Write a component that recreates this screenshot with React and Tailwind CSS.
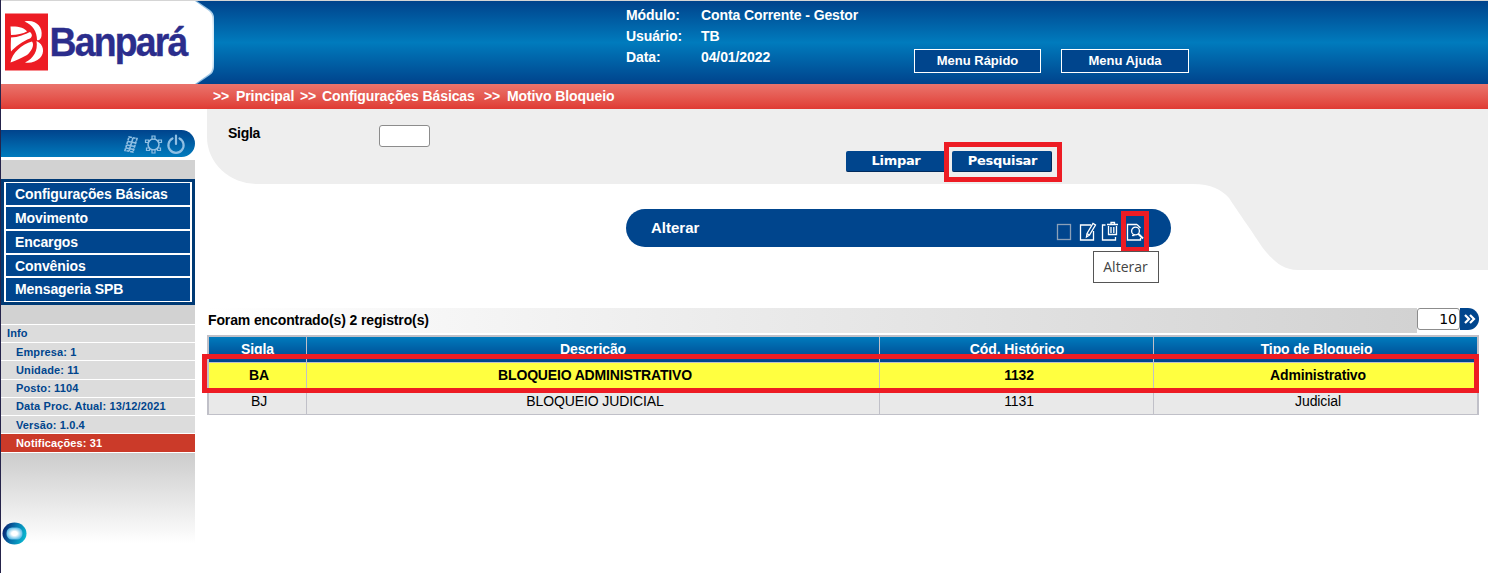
const menu = [
  { label: "Configurações Básicas", h: "h-[22px]" },
  { label: "Movimento", h: "h-[22px]" },
  { label: "Encargos", h: "h-[22px]" },
  { label: "Convênios", h: "h-[21px] pt-px" },
  { label: "Mensageria SPB", h: "h-[23px]" },
];

const info = [
  { label: "Empresa: 1", h: "h-[18px] leading-[18px]" },
  { label: "Unidade: 11", h: "h-[19px] leading-[18px]" },
  { label: "Posto: 1104", h: "h-[18px] leading-[16px]" },
  { label: "Data Proc. Atual: 13/12/2021", h: "h-[18px] leading-[16px]" },
  { label: "Versão: 1.0.4", h: "h-[18px] leading-[18px]" },
];

const rows = [
  ["BA", "BLOQUEIO ADMINISTRATIVO", "1132", "Administrativo"],
  ["BJ", "BLOQUEIO JUDICIAL", "1131", "Judicial"],
];

function Logo() {
  return (
    <svg width="214" height="83" viewBox="0 0 214 83" className="block shrink-0">
      <defs>
        <linearGradient id="edge" x1="0" x2="0" y1="0" y2="1">
          <stop offset="0" stopColor="#7fb3dc" />
          <stop offset="0.3" stopColor="#d8eaf6" />
          <stop offset="0.7" stopColor="#d8eaf6" />
          <stop offset="1" stopColor="#7fb3dc" />
        </linearGradient>
      </defs>
      <path d="M0 0H196L209 9Q213 12 213 17V66Q213 71 209 74L196 83H0Z" fill="url(#edge)" />
      <path d="M0 0H194L208 10Q211.500 13 211.500 18V65Q211.500 70 208 73L194 83H0Z" fill="#fff" />
      <rect x="4" y="12.500" width="43" height="57" fill="#ed1c24" />
      <g fill="#fff">
        <path d="M9.500 25.500C17 25 24 27 26 30.500C22 32.500 16 34 10 34Z" />
        <path d="M23.500 20.500C35 18 42 26 40.500 35C40 38 38 40 36 39C36 31 32 24 23.500 20.500Z" />
        <path d="M10 36.500C17 36.500 25 33 29 31C32 34 31 36 29 37.500C22 40 14 46 10 50.500C9.500 46 10 40 10 36.500Z" />
        <path d="M9.500 61.500C11 52 21 43 31 40.500C34 44 30 51 26 54C20 57 15 60 9.500 61.500Z" />
        <path d="M35.500 40C43 43 44 52 39 57C35 61 29 62.500 24 61.500C33 57 37 50 35.500 40Z" />
      </g>
      <text x="48.500" y="54.500" fontFamily="'Liberation Sans', Arial, sans-serif" fontWeight="700" fontSize="41.500" letterSpacing="-2" fill="#2b2d8c" stroke="#2b2d8c" strokeWidth="0.400" textLength="137" lengthAdjust="spacingAndGlyphs">Banpará</text>
    </svg>
  );
}

function SideIcons() {
  return (
    <svg width="66" height="22" viewBox="0 0 66 22" fill="none" stroke="#8fbfe3" className="block">
      <g strokeWidth="1.600">
        <path d="M8 4L16 5.500L12 19L4 17.500Z" strokeDasharray="3 0.700" />
        <path d="M12 5L8 18M7 8.500L15 10M6 12L14 13.500M5 15L13 16.500" />
      </g>
      <g strokeWidth="1.500">
        <circle cx="32.500" cy="11.500" r="5.500" />
        <path d="M31 3h3v3h-3zM31 17h3v3h-3zM24.500 7h3v2.500h-3zM37.500 7h3v2.500h-3zM25.500 15h3v2.500h-3zM36.500 15h3v2.500h-3z" strokeWidth="1.200" fill="#0462a7" />
      </g>
      <g strokeWidth="2.200" strokeLinecap="round">
        <path d="M51.500 5.500A7.600 7.600 0 1 0 58.500 5.500M55 2.500V11" />
      </g>
    </svg>
  );
}

function ToolbarIcons() {
  return (
    <svg width="90" height="22" viewBox="0 0 90 22" fill="none" stroke="#fff" className="block">
      <rect x="1.500" y="4.500" width="13" height="15" stroke="#8ba0b8" strokeWidth="1.300" />
      <g strokeWidth="1.300">
        <path d="M35 5H24.500V20H37.500V11" />
        <path d="M31 13.500L37 3.500L39.500 5L33.500 15L30.500 17ZM31 13.500L33.500 15" />
      </g>
      <g strokeWidth="1.300">
        <path d="M49.500 5H46.500V20H59.500V17M51 4.500H62M55 4V2.500H58.500V4M52.500 6V14.500H60.500V6M55 7V13M57.800 7V13" />
      </g>
      <g strokeWidth="1.300">
        <path d="M81 4.500H71.500V20H84.500V18M81 4.500L84.500 8" />
        <circle cx="79.500" cy="11" r="3.900" />
        <path d="M76 15.500H78.500" />
        <path d="M82 13.500L87 18.500" strokeWidth="2" />
      </g>
    </svg>
  );
}

const cols = "grid grid-cols-[97px_572px_273px_323px] gap-px";
const headPad = ["", "", "pl-px", "pl-[2px]"];
const cellPad = ["pl-[3px]", "pl-[4px]", "pl-[5px]", "pl-[5px]"];

export default function App() {
  return (
    <div className="relative w-[1488px] h-[573px] overflow-hidden bg-white border-l border-[#25234a] font-['Liberation_Sans',Arial,sans-serif] text-black">
      <header className="h-[84px] border-t border-[#d5d5d5] flex bg-linear-to-b from-[#00438c] via-[#007bbd] to-[#00438c]">
        <Logo />
        <dl className="ml-[411px] mt-[3px] w-[287px] grid grid-cols-[75px_1fr] auto-rows-[21.300px] content-start items-center text-[14px] tracking-[-0.1px] font-bold text-white leading-[20px]">
          <dt>Módulo:</dt><dd>Conta Corrente - Gestor</dd>
          <dt>Usuário:</dt><dd>TB</dd>
          <dt>Data:</dt><dd>04/01/2022</dd>
        </dl>
        <nav className="mt-[48px] ml-px flex gap-[20px] h-[24px] text-[13px] font-bold text-white">
          <button className="w-[127px] border border-white bg-[#00458d]">Menu Rápido</button>
          <button className="w-[128px] border border-white bg-[#00458d]">Menu Ajuda</button>
        </nav>
      </header>
      <div className="h-[25px] flex items-center pl-[212px] bg-linear-to-b from-[#ea736c] to-[#df3a33] text-[14px] font-bold text-white tracking-[-0.1px] whitespace-pre">
        <span className="w-[23px]">&gt;&gt;</span>
        <span className="w-[64px]">Principal</span>
        <span className="w-[22px]">&gt;&gt;</span>
        <span className="w-[162px]">Configurações Básicas</span>
        <span className="w-[23px]">&gt;&gt;</span>
        <span>Motivo Bloqueio</span>
      </div>
      <div className="flex">
        <aside className="w-[194px] pt-[21px] shrink-0">
          <div className="h-[27px] rounded-r-full bg-linear-to-b from-[#00438c] to-[#007bbd] flex justify-end items-center pr-[8px]">
            <SideIcons />
          </div>
          <div className="mt-[3px] h-[19px] bg-[#d2d2d2]" />
          <div className="h-[126px] bg-[#003a75] p-[3px]">
            <ul className="h-[120px] w-[188px] bg-white border-x-2 border-y border-white flex flex-col gap-[2px]">
              {menu.map((m) => (
                <li key={m.label} className={`${m.h} bg-[#00458d] pl-[9px] flex items-center text-[14px] font-bold text-white tracking-[-0.1px]`}>{m.label}</li>
              ))}
            </ul>
          </div>
          <div className="h-[19px] bg-[#d2d2d2]" />
          <div className="text-[11px] font-bold tracking-[0.12px] text-[#00458d]">
            <div className="h-[18px] border-t border-white bg-[#dcdcdc] pl-[6px] leading-[16px]">Info</div>
            {info.map((t) => (
              <div key={t.label} className={`${t.h} border-t border-white bg-[#dcdcdc] pl-[15px]`}>{t.label}</div>
            ))}
            <div className="h-[20px] border-y border-white bg-[#cb3a29] text-white pl-[15px] leading-[18px]">Notificações: 31</div>
          </div>
          <div className="h-[90px] bg-linear-to-b from-[#cccccc] to-white pt-[69px] pl-px">
            <svg width="25" height="24" viewBox="0 0 25 24" className="block">
              <defs>
                <linearGradient id="orb" x1="0" y1="0.2" x2="1" y2="0.5">
                  <stop offset="0" stopColor="#061b6b" />
                  <stop offset="0.5" stopColor="#0874ad" />
                  <stop offset="1" stopColor="#08b6cf" />
                </linearGradient>
                <radialGradient id="core">
                  <stop offset="0.35" stopColor="#fff" />
                  <stop offset="1" stopColor="#5dbce6" />
                </radialGradient>
              </defs>
              <ellipse cx="12.500" cy="11.500" rx="12" ry="11" fill="url(#orb)" />
              <rect x="4.500" y="5.500" width="16" height="12" rx="5.500" fill="url(#core)" />
            </svg>
          </div>
        </aside>
        <main className="ml-[12px] w-[1281px] shrink-0">
          <section className="h-[75px] bg-[#eeeeee] rounded-bl-[50px_47px] flex items-start text-[14px] font-bold">
            <label className="ml-[21px] mt-[14px] w-[151px] leading-[20px] tracking-[-0.3px]">Sigla</label>
            <input className="mt-[16px] w-[51px] h-[22px] bg-white border border-[#8c8c8c] rounded-[3px]" />
            <div className="ml-[416px] mt-[42px] flex h-[21px] font-['Verdana','DejaVu_Sans',sans-serif] text-[13px] font-bold text-white tracking-[-0.3px]">
              <button className="w-[100px] bg-[#00458d] border-b border-[#002a5c] rounded-[2px]">Limpar</button>
              <div className="relative ml-[6px]">
                <button className="w-[100px] h-[21px] bg-[#00458d] border-b border-r border-[#002a5c] rounded-[2px] pl-[2px]">Pesquisar</button>
                <div className="absolute -left-[8px] -top-[9px] w-[118px] h-[40px] border-[5px] border-[#ed1c24]" />
              </div>
            </div>
          </section>
          <section className="flex h-[124px] items-start">
            <div className="ml-[419px] mt-[25px] relative w-[545px] h-[38px] rounded-full bg-[#00458d] flex items-center pl-[25px] text-white">
              <span className="text-[15px] font-bold">Alterar</span>
              <div className="ml-auto mr-[25px] mt-[5px]"><ToolbarIcons /></div>
              <div className="absolute left-[495px] top-[2px] w-[28px] h-[41px] border-[5px] border-[#ed1c24]" />
              <div className="absolute left-[467px] top-[42px] w-[66px] h-[32px] border border-[#555] bg-white text-[#444] font-['Open_Sans',sans-serif] text-[14px] flex items-center justify-center pr-px pb-[2px]">Alterar</div>
            </div>
            <svg width="127" height="86" viewBox="0 0 127 86" className="block">
              <path d="M0 0H22C40 0 51 6 58 14C60 17 64 23 77 42C88 58 92 65 96 69C103 77 112 86 127 86V0Z" fill="#eeeeee" />
            </svg>
            <div className="flex-1 h-[86px] bg-[#eeeeee]" />
          </section>
          <section className="flex h-[27px] items-start">
            <div className="w-[1210px] h-[25px] pl-px bg-linear-to-r from-white to-[#d2d2d2] flex items-center text-[14px] font-bold tracking-[-0.12px]">Foram encontrado(s) 2 registro(s)</div>
            <input readOnly value="10" className="w-[43px] h-[22px] bg-white border border-[#8c8c8c] rounded-[3px] text-right pr-[2px] font-['Verdana','DejaVu_Sans',sans-serif] text-[14px]" />
            <button className="w-[19px] h-[22px] rounded-r-full bg-[#00458d] flex items-center justify-center">
              <svg width="12" height="10" viewBox="0 0 12 10" fill="none" stroke="#fff" strokeWidth="2.200"><path d="M1 1L5 5L1 9M6 1L10 5L6 9" /></svg>
            </button>
          </section>
          <section className="relative w-[1272px] bg-[#c0c0c8] pt-[2px] px-[2px] pb-px text-[14px] leading-[25px] text-center tracking-[-0.1px]">
            <div className={`${cols} h-[25px] font-bold text-white`}>
              {["Sigla", "Descrição", "Cód. Histórico", "Tipo de Bloqueio"].map((h, i) => (
                <div key={h} className={`bg-linear-to-b from-[#007bbd] to-[#00438c] ${headPad[i]}`}>{h}</div>
              ))}
            </div>
            <div className={`${cols} mt-px h-[25px] font-bold tracking-[-0.16px]`}>
              {rows[0].map((c, i) => <div key={c} className={`bg-[#ffff40] ${cellPad[i]}`}>{c}</div>)}
            </div>
            <div className={`${cols} mt-px h-[25px]`}>
              {rows[1].map((c, i) => <div key={c} className={`bg-[#e9e9e9] ${cellPad[i]}`}>{c}</div>)}
            </div>
            <div className="absolute -left-[5px] top-[19px] w-[1277px] h-[39px] border-[5px] border-[#ed1c24]" />
          </section>
        </main>
      </div>
    </div>
  );
}
